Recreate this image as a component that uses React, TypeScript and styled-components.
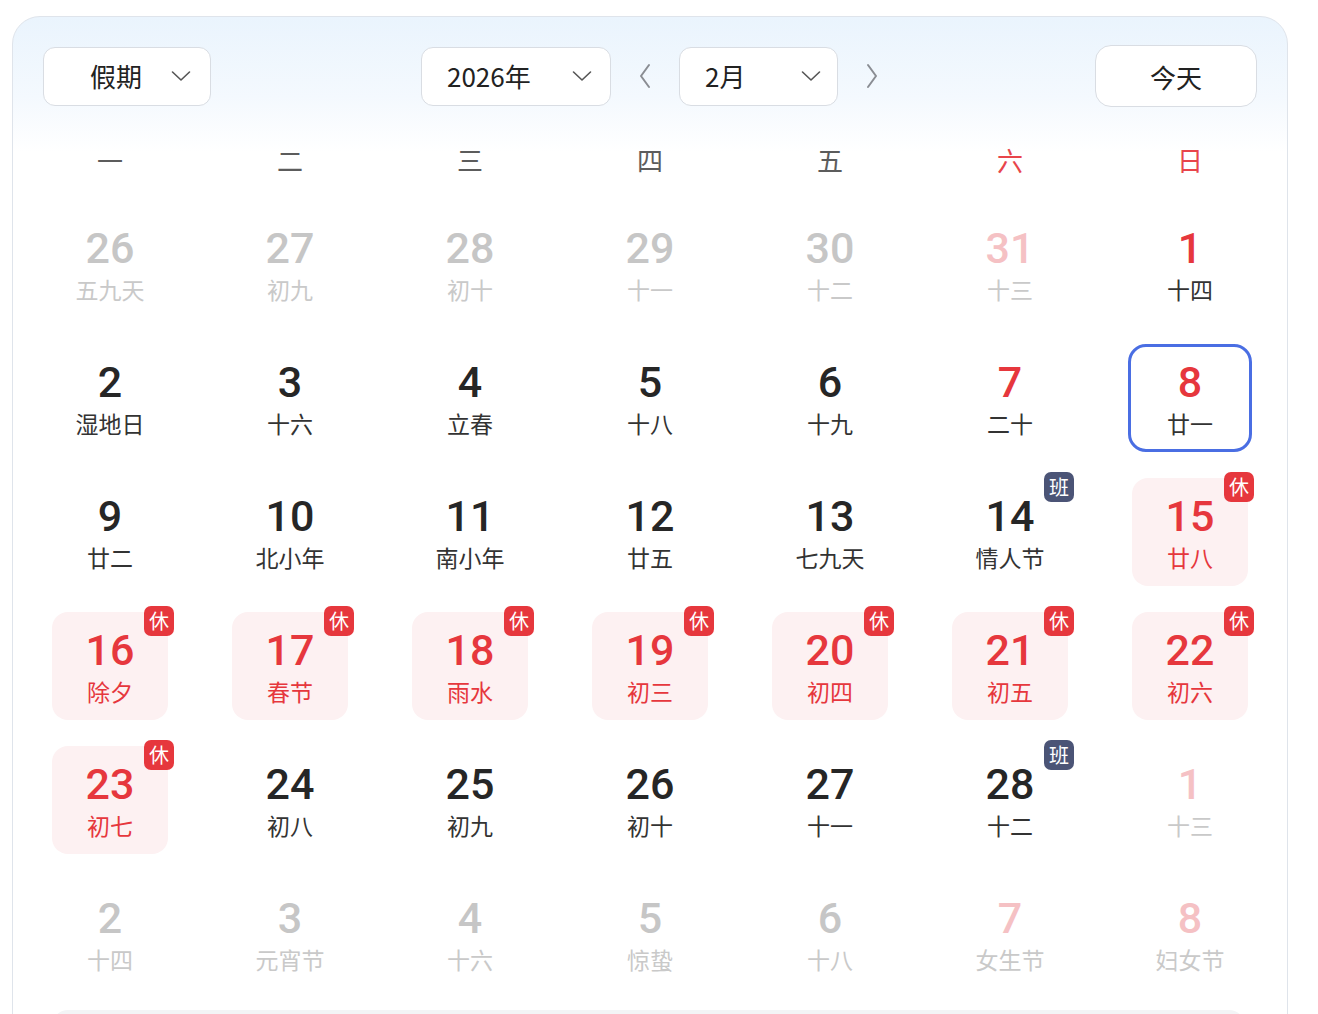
import React from 'react';
import styled, { createGlobalStyle } from 'styled-components';

const GlobalStyle = createGlobalStyle`
  html, body {
    margin: 0;
    padding: 0;
    background: #ffffff;
  }
  body {
    font-family: 'Roboto', 'Noto Sans CJK SC', sans-serif;
    color: #222;
  }
  * {
    box-sizing: border-box;
  }
`;

const Page = styled.div`
  padding: 16px 0 0 12px;
  height: 1014px;
  overflow: hidden;
`;

const Card = styled.div`
  width: 1276px;
  border: 1px solid #dfe4eb;
  border-radius: 28px;
  background: linear-gradient(180deg, #eaf4fd 0px, #f4f9fe 80px, #ffffff 135px);
  padding: 0 7px 40px;
`;

const Toolbar = styled.div`
  display: grid;
  grid-template-columns: 1fr auto 1fr;
  align-items: center;
  padding: 28px 23px 0;
  height: 90px;
`;

const NavGroup = styled.div`
  display: flex;
  align-items: center;
  gap: 24px;
  margin-left: 3px;
`;

const Select = styled.button<{ $width: number; $pl: number; $pr: number }>`
  display: flex;
  align-items: center;
  justify-content: space-between;
  width: ${({ $width }) => $width}px;
  height: 59px;
  padding: 0 ${({ $pr }) => $pr}px 0 ${({ $pl }) => $pl}px;
  background: #ffffff;
  border: 1.5px solid #d9dde3;
  border-radius: 12px;
  font-family: 'Roboto', 'Noto Sans CJK SC', sans-serif;
  font-size: 26px;
  color: #222;
  cursor: pointer;
`;

const SelectText = styled.span`
  font-family: 'Noto Sans CJK SC', sans-serif;
  line-height: 1;
`;

const ArrowButton = styled.button`
  display: flex;
  align-items: center;
  justify-content: center;
  width: 20px;
  height: 40px;
  padding: 0;
  background: none;
  border: none;
  cursor: pointer;
`;

const TodayButton = styled.button`
  justify-self: end;
  width: 162px;
  height: 62px;
  background: #ffffff;
  border: 1.5px solid #d9dde3;
  border-radius: 16px;
  font-family: 'Noto Sans CJK SC', sans-serif;
  font-size: 26px;
  color: #222;
  cursor: pointer;
`;

const WeekHeader = styled.div`
  display: grid;
  grid-template-columns: repeat(7, 180px);
  height: 70px;
  margin-top: 17px;
  margin-bottom: 3px;
  align-items: center;
`;

const WeekLabel = styled.div<{ $weekend?: boolean }>`
  text-align: center;
  font-family: 'Noto Sans CJK SC', sans-serif;
  font-size: 26px;
  font-weight: 400;
  color: ${({ $weekend }) => ($weekend ? '#e8454b' : '#5c5c5c')};
`;

const Grid = styled.div`
  display: grid;
  grid-template-columns: repeat(7, 180px);
  grid-auto-rows: 134px;
`;

const Cell = styled.div`
  display: flex;
  align-items: center;
  justify-content: center;
`;

const DayBox = styled.div<{ $rest?: boolean; $selected?: boolean }>`
  position: relative;
  display: flex;
  flex-direction: column;
  align-items: center;
  justify-content: center;
  width: ${({ $selected }) => ($selected ? 124 : 116)}px;
  height: 108px;
  padding-top: 2px;
  border-radius: ${({ $selected }) => ($selected ? 18 : 16)}px;
  border: ${({ $selected }) => ($selected ? '3px solid #4a6ee3' : 'none')};
  background: ${({ $rest }) => ($rest ? '#fdf1f2' : 'transparent')};
`;

const DayNum = styled.div<{ $color: string }>`
  font-family: 'Roboto', 'Noto Sans', sans-serif;
  font-size: 43px;
  font-weight: 500;
  line-height: 48px;
  color: ${({ $color }) => $color};
`;

const Lunar = styled.div<{ $color: string }>`
  font-family: 'Noto Sans CJK SC', sans-serif;
  font-size: 23px;
  line-height: 34px;
  color: ${({ $color }) => $color};
  white-space: nowrap;
`;

const Badge = styled.span<{ $work?: boolean }>`
  position: absolute;
  top: -6px;
  right: -6px;
  width: 30px;
  height: 30px;
  border-radius: 7px;
  display: flex;
  align-items: center;
  justify-content: center;
  font-family: 'Noto Sans CJK SC', sans-serif;
  font-size: 20px;
  line-height: 1;
  color: #ffffff;
  background: ${({ $work }) => ($work ? '#4b5476' : '#e6373d')};
`;

const Footer = styled.div`
  height: 60px;
  margin: 9px 35px 0 32px;
  border-radius: 16px;
  background: #f3f4f6;
`;

const Chevron = () => (
  <svg width="20" height="12" viewBox="0 0 20 12" fill="none">
    <path d="M1.5 2 L10 10 L18.5 2" stroke="#555" strokeWidth="1.6" strokeLinecap="round" strokeLinejoin="round" />
  </svg>
);

const Arrow = ({ dir }: { dir: 'left' | 'right' }) => (
  <svg width="14" height="26" viewBox="0 0 14 26" fill="none">
    <path
      d={dir === 'left' ? 'M11 2 L3 13 L11 24' : 'M3 2 L11 13 L3 24'}
      stroke="#8a8d93"
      strokeWidth="2"
      strokeLinecap="round"
      strokeLinejoin="round"
    />
  </svg>
);

type Day = {
  n: number;
  l: string;
  other?: boolean;
  rest?: boolean;
  work?: boolean;
  selected?: boolean;
};

const days: Day[] = [
  { n: 26, l: '五九天', other: true },
  { n: 27, l: '初九', other: true },
  { n: 28, l: '初十', other: true },
  { n: 29, l: '十一', other: true },
  { n: 30, l: '十二', other: true },
  { n: 31, l: '十三', other: true },
  { n: 1, l: '十四' },
  { n: 2, l: '湿地日' },
  { n: 3, l: '十六' },
  { n: 4, l: '立春' },
  { n: 5, l: '十八' },
  { n: 6, l: '十九' },
  { n: 7, l: '二十' },
  { n: 8, l: '廿一', selected: true },
  { n: 9, l: '廿二' },
  { n: 10, l: '北小年' },
  { n: 11, l: '南小年' },
  { n: 12, l: '廿五' },
  { n: 13, l: '七九天' },
  { n: 14, l: '情人节', work: true },
  { n: 15, l: '廿八', rest: true },
  { n: 16, l: '除夕', rest: true },
  { n: 17, l: '春节', rest: true },
  { n: 18, l: '雨水', rest: true },
  { n: 19, l: '初三', rest: true },
  { n: 20, l: '初四', rest: true },
  { n: 21, l: '初五', rest: true },
  { n: 22, l: '初六', rest: true },
  { n: 23, l: '初七', rest: true },
  { n: 24, l: '初八' },
  { n: 25, l: '初九' },
  { n: 26, l: '初十' },
  { n: 27, l: '十一' },
  { n: 28, l: '十二', work: true },
  { n: 1, l: '十三', other: true },
  { n: 2, l: '十四', other: true },
  { n: 3, l: '元宵节', other: true },
  { n: 4, l: '十六', other: true },
  { n: 5, l: '惊蛰', other: true },
  { n: 6, l: '十八', other: true },
  { n: 7, l: '女生节', other: true },
  { n: 8, l: '妇女节', other: true },
];

const weekdays = ['一', '二', '三', '四', '五', '六', '日'];

function numColor(d: Day, weekend: boolean) {
  if (d.other) return weekend ? '#f5c1c4' : '#c6c6c6';
  if (d.rest) return '#e6373d';
  if (d.work) return '#262626';
  return weekend ? '#e6373d' : '#262626';
}

function lunarColor(d: Day) {
  if (d.other) return '#c9c9c9';
  if (d.rest) return '#e6373d';
  return '#333333';
}

const App: React.FC = () => {
  return (
    <Page>
      <GlobalStyle />
      <Card>
        <Toolbar>
          <Select $width={168} $pl={46} $pr={19}>
            <SelectText>假期</SelectText>
            <Chevron />
          </Select>
          <NavGroup>
            <Select $width={190} $pl={25} $pr={18}>
              <SelectText>2026年</SelectText>
              <Chevron />
            </Select>
            <ArrowButton aria-label="上个月">
              <Arrow dir="left" />
            </ArrowButton>
            <Select $width={159} $pl={25} $pr={16}>
              <SelectText>2月</SelectText>
              <Chevron />
            </Select>
            <ArrowButton aria-label="下个月">
              <Arrow dir="right" />
            </ArrowButton>
          </NavGroup>
          <TodayButton>今天</TodayButton>
        </Toolbar>

        <WeekHeader>
          {weekdays.map((w, i) => (
            <WeekLabel key={w} $weekend={i >= 5}>{w}</WeekLabel>
          ))}
        </WeekHeader>

        <Grid>
          {days.map((d, i) => {
            const weekend = i % 7 >= 5;
            return (
              <Cell key={i}>
                <DayBox $rest={d.rest} $selected={d.selected}>
                  <DayNum $color={numColor(d, weekend)}>{d.n}</DayNum>
                  <Lunar $color={lunarColor(d)}>{d.l}</Lunar>
                  {d.rest && <Badge>休</Badge>}
                  {d.work && <Badge $work>班</Badge>}
                </DayBox>
              </Cell>
            );
          })}
        </Grid>
        <Footer />
      </Card>
    </Page>
  );
};

export default App;
